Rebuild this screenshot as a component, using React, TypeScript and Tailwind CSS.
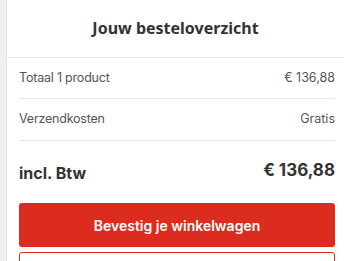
export default function App() {
  return (
    <div className="flex w-[344px] h-[261px] overflow-hidden bg-white" style={{ fontFamily: 'Inter, "Liberation Sans", sans-serif' }}>
      <div className="w-[7px] shrink-0 bg-[#f0f0f0] border-r border-[#e4e4e4]" />
      <div className="flex-1 flex flex-col">
        {/* Header */}
        <div className="h-[58px] shrink-0 flex items-center justify-center border-b border-[#e6e6e6]">
          <h2 className="text-[16px] font-bold text-[#333] -mt-[1px]" style={{ fontFamily: '"Noto Sans", sans-serif' }}>
            Jouw besteloverzicht
          </h2>
        </div>

        <div className="pl-3 pr-[9px]">
          <div className="h-[41px] flex items-center justify-between border-b border-[#e6e6e6] text-[12.5px] text-[#555]">
            <span className="tracking-[-0.2px] pt-[1px]">Totaal 1 product</span>
            <span className="pt-[1px]">€ 136,88</span>
          </div>
          <div className="h-[42px] flex items-center justify-between border-b border-[#e6e6e6] text-[12.5px] text-[#555]">
            <span className="tracking-[-0.2px]">Verzendkosten</span>
            <span>Gratis</span>
          </div>

          <div className="h-[62px] flex items-center justify-between text-[#333] font-bold">
            <span className="text-[16px] pt-[1px]">incl. Btw</span>
            <span className="text-[17px] -mt-[2px]">€ 136,88</span>
          </div>

          <button className="w-full h-[44px] rounded-[3px] bg-[#dc2c20] text-white text-[14px] font-semibold">
            Bevestig je winkelwagen
          </button>
          <button className="mt-[5px] w-full h-[44px] rounded-[3px] border border-[#dc2c20] bg-white" />
        </div>
      </div>
    </div>
  );
}
